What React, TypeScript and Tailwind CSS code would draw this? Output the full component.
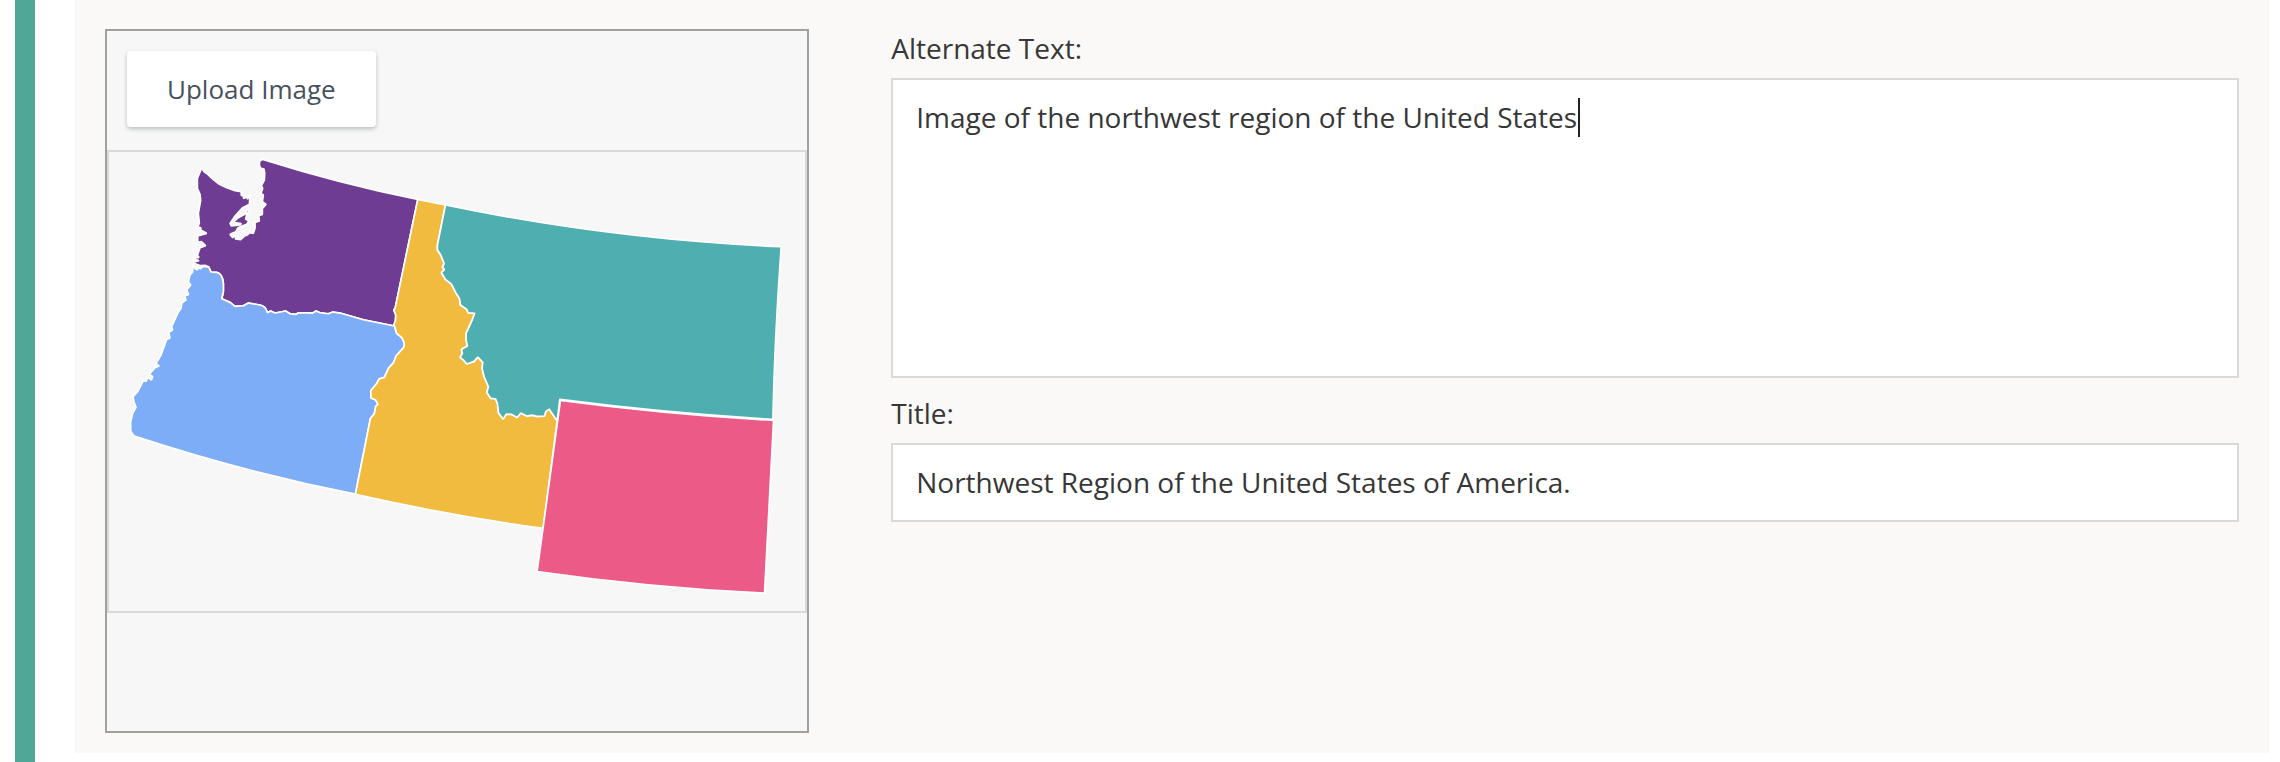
import { useState } from "react";

interface Region {
  name: string;
  fill: string;
  d: string;
}

// State outlines, drawn on a 2088 x 1377 grid
const regions: Region[] = [
  {
    name: "Washington",
    fill: "#6f3c94",
    d: "M278 48L285 59L297 68L313 83L331 97L353 107L378 116L396 119L397 131L405 129L403 139L411 136L416 129L415 142L423 129L421 157L401 167L378 192L363 214L367 222L393 219L397 215L373 211L385 199L408 186L416 173L422 176L413 187L410 201L419 207L413 217L399 222L387 227L380 239L363 247L371 257L381 249L379 261L395 263L405 253L414 249L423 242L433 244L438 229L438 211L451 207L449 191L460 187L460 169L471 157L460 149L463 129L456 124L461 109L457 101L466 84L467 64L465 51L456 49L451 41L452 27L461 22Q692 95 926 142L858 469L854 474L860 489L859 506L854 519L856 522L763 503L693 483L671 480L658 485L633 482L621 477L611 483L568 482L561 487L543 485L530 477L498 483L485 477L475 482Q470 462 453 459L418 453L403 461L378 463L363 451L338 440L343 419L343 394Q340 364 323 361L306 360L299 344L288 340L275 341L261 336L251 331L270 326L253 319L270 316L265 310L273 287L290 281L277 269L266 271L266 252L293 244L276 235L275 227L266 224L271 214L268 184L275 144L273 127L265 109L265 79Z",
  },
  {
    name: "Oregon",
    fill: "#7dadf7",
    d: "M251 336L258 350L265 354L267 347L275 350L281 344L288 343L299 346L306 360L323 361Q340 364 343 394L343 419L338 440L363 451L378 463L403 461L418 453L453 459Q470 462 475 482L485 477L498 483L530 477L543 485L561 487L568 482L611 483L621 477L633 482L658 485L671 480L693 483L763 503L856 522L863 544L878 557Q890 574 883 587L861 612L853 632L838 649L826 676L811 680L803 694L785 716L786 738L800 744L807 757L800 762L796 784L784 799L739 1026Q408 961 76 852Q65 840 65 834L65 809L71 784L81 766L75 749L72 734L86 719L103 686L111 688L116 676L127 684L131 674L121 666L139 646L151 642L141 634L156 609L173 562L183 558L179 541L191 534L188 524L206 484L216 469L219 452L231 444L227 432L239 427L233 414L245 399L238 389L243 369L251 359Z",
  },
  {
    name: "Idaho",
    fill: "#f1bb40",
    d: "M926 142L1009 159L985 279L985 294L995 309L1005 334L1000 346L1006 352L997 362L1009 382L1027 396L1040 422L1051 439L1054 459L1073 472L1077 482L1097 484L1089 504L1078 529L1071 544L1071 564L1075 582L1057 592L1060 604L1053 616L1065 626L1073 636L1095 628L1106 615L1121 631L1119 649L1125 674L1138 704L1133 721L1145 739L1159 740L1165 754L1168 782L1182 801L1191 786L1208 787L1224 796L1235 783L1253 792L1268 789L1283 793L1306 792L1310 778L1320 771L1329 784L1344 806L1302 1129Q1019 1090 739 1027L784 799L796 784L800 762L807 757L800 744L786 738L785 716L803 694L811 680L826 676L838 649L853 632L861 612L883 587Q890 574 878 557L863 544L856 522L854 519L859 506L860 489L854 474L858 469Z",
  },
  {
    name: "Montana",
    fill: "#4faeb0",
    d: "M1009 159Q1511 263 2016 284Q1996 560 1991 802Q1671 783 1352 742L1344 806L1329 784L1320 771L1310 778L1306 792L1283 793L1268 789L1253 792L1235 783L1224 796L1208 787L1191 786L1182 801L1168 782L1165 754L1159 740L1145 739L1133 721L1138 704L1125 674L1119 649L1121 631L1106 615L1095 628L1073 636L1065 626L1053 616L1060 604L1057 592L1075 582L1071 564L1071 544L1078 529L1089 504L1097 484L1077 482L1073 472L1054 459L1051 439L1040 422L1027 396L1009 382L997 362L1006 352L1000 346L1005 334L995 309L985 294L985 279Z",
  },
  {
    name: "Wyoming",
    fill: "#ec5a88",
    d: "M1354 745Q1671 787 1993 805L1966 1323Q1626 1307 1284 1258Z",
  },
];

function RegionMap({ label }: { label: string }) {
  return (
    <svg viewBox="0 0 2088 1377" role="img" aria-label={label} className="block w-full">
      {regions.map((region) => (
        <path
          key={region.name}
          d={region.d}
          fill={region.fill}
          stroke="#fff"
          strokeWidth={5}
          strokeLinejoin="bevel"
        />
      ))}
    </svg>
  );
}

export default function App() {
  const [altText, setAltText] = useState("Image of the northwest region of the United States");
  const [title, setTitle] = useState("Northwest Region of the United States of America.");

  return (
    <div className="flex min-h-screen bg-white pl-[15px] pr-[11px] font-['Open_Sans',sans-serif] text-[28px] leading-[38px] text-[#373737]">
      {/* Active item marker */}
      <div className="w-5 shrink-0 bg-[#50a798]" />

      <main className="mb-[9px] ml-10 flex min-w-0 flex-1 items-start gap-[82px] bg-[#faf9f7] px-[30px] pb-5 pt-[29px]">
        {/* Image preview */}
        <section className="aspect-square w-[33%] shrink-0 border-2 border-[#a0a09f] bg-[#f7f7f7]">
          <div className="px-5 pb-[23px] pt-5">
            <button
              type="button"
              className="rounded bg-white px-10 py-[19px] text-[26px] text-[#46525e] shadow-[0_2px_4px_rgba(70,82,94,0.35)]"
            >
              Upload Image
            </button>
          </div>
          <div className="border-2 border-[#d9d9d9]">
            <RegionMap label={altText} />
          </div>
        </section>

        {/* Image details */}
        <form className="flex min-w-0 flex-1 flex-col gap-4">
          <div className="flex flex-col gap-[11px]">
            <label htmlFor="alt-text">Alternate Text:</label>
            <div className="relative flex">
              <textarea
                id="alt-text"
                value={altText}
                onChange={(e) => setAltText(e.target.value)}
                className="h-[300px] w-full resize-none border-2 border-[#d9d9d7] bg-white px-[23px] py-[18px] caret-transparent outline-none"
              />
              <span className="absolute left-[687px] top-5 h-[39px] w-[2px] bg-[#222]" />
            </div>
          </div>
          <div className="flex flex-col gap-[11px]">
            <label htmlFor="title">Title:</label>
            <input
              id="title"
              type="text"
              value={title}
              onChange={(e) => setTitle(e.target.value)}
              className="w-full border-2 border-[#d9d9d7] bg-white px-[23px] pb-[19px] pt-[18px] outline-none"
            />
          </div>
        </form>
      </main>
    </div>
  );
}
